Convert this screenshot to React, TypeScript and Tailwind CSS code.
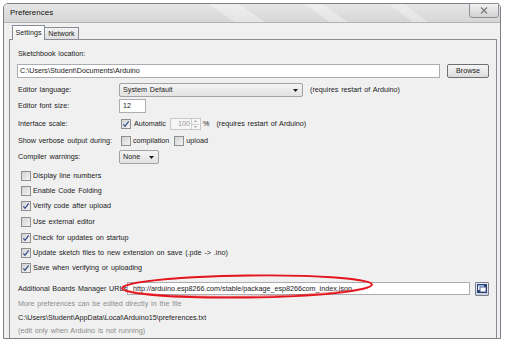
import React from "react";

function Check({ checked }: { checked?: boolean }) {
  return (
    <span className="w-[10px] h-[10px] border border-[#8e8f8f] bg-gradient-to-br from-[#d2d2d2] to-[#f4f4f4] flex items-center justify-center shrink-0">
      {checked && (
        <svg width="8" height="8" viewBox="0 0 8 8">
          <path d="M1.3 4.3 L3 6.2 L6.7 1.4" stroke="#3b5191" strokeWidth="1.2" fill="none" />
        </svg>
      )}
    </span>
  );
}

function Arrow() {
  return (
    <svg width="5" height="3" viewBox="0 0 5 3">
      <path d="M0 0 L5 0 L2.5 3 Z" fill="#1a1a1a" />
    </svg>
  );
}

function CheckRow({ label, checked, cls }: { label: string; checked?: boolean; cls: string }) {
  return (
    <div className={`flex items-center h-[12px] ml-[4px] ${cls}`}>
      <Check checked={checked} />
      <span className="ml-[2px]">{label}</span>
    </div>
  );
}

export default function App() {
  return (
    <div className="w-[507px] h-[349px] bg-white relative overflow-hidden font-['Liberation_Sans',Arial,sans-serif] text-[7.2px] [word-spacing:0.8px] leading-none text-[#1b1b1b]">
      <div className="ml-[3px] mt-[3px] w-[498px] h-[336px] border border-[#7c7f86] rounded-t-[5px] bg-[#f0f0f0] flex flex-col relative">
        {/* title bar */}
        <div className="h-[19px] relative overflow-hidden rounded-t-[4px] bg-gradient-to-b from-[#e6e6e6] to-[#d6d6d6] border-b border-[#b4b4b4] flex items-center pl-[6px] shrink-0">
          <svg className="absolute left-0 top-0" width="498" height="19" viewBox="0 0 498 19">
            <polygon points="205,0 235,0 262,19 232,19" fill="#ffffff" opacity="0.35" />
            <polygon points="300,0 318,0 345,19 327,19" fill="#ffffff" opacity="0.35" />
            <polygon points="385,0 400,0 425,19 410,19" fill="#ffffff" opacity="0.3" />
          </svg>
          <span className="relative text-[8px] text-[#111]">Preferences</span>
        </div>
        {/* close button */}
        <div className="absolute right-[1px] top-[-1px] w-[30px] h-[15px] border border-[#8d9099] rounded-b-[3px] bg-gradient-to-b from-[#f2f2f2] to-[#d2d2d2] flex items-center justify-center">
          <svg width="8" height="7" viewBox="0 0 8 7">
            <path d="M1 0.5 L7 6.5 M7 0.5 L1 6.5" stroke="#7a7a7a" strokeWidth="1.2" />
          </svg>
        </div>
        {/* body */}
        <div className="flex-1 flex flex-col pl-[5px] pr-[3px] pt-[2px]">
          <div className="flex items-end h-[14px] ml-[3px] shrink-0 relative z-10">
            <div className="w-[33px] border border-[#898c95] border-b-0 bg-gradient-to-b from-white to-[#f0f0f0] flex items-center justify-center pb-[1px] mb-[-1px] h-[15px]">
              Settings
            </div>
            <div className="h-[12px] w-[34px] border border-[#898c95] border-l-0 border-b-0 bg-gradient-to-b from-[#f2f2f2] to-[#e1e1e1] flex items-center justify-center">
              Network
            </div>
          </div>
          <div className="flex-1 border border-b-0 border-[#898c95] bg-[#f0f0f0] flex flex-col pl-[7px] pr-[7px]">
            <div className="mt-[8px] h-[12px] flex items-center ml-[1px]">Sketchbook location:</div>
            <div className="mt-[4px] h-[14px] flex items-center">
              <div className="w-[423px] h-[14px] bg-white border border-[#abadb3] flex items-center pl-[2px]">
                C:\Users\Student\Documents\Arduino
              </div>
              <div className="ml-[7px] w-[42px] h-[14px] border border-[#707070] rounded-[2px] bg-gradient-to-b from-[#f6f6f6] to-[#dcdcdc] flex items-center justify-center">
                Browse
              </div>
            </div>
            <div className="mt-[5px] h-[14px] flex items-center">
              <span className="w-[101px] ml-[1px]">Editor language:</span>
              <div className="w-[184px] h-[14px] border border-[#a3a3a3] rounded-[2px] bg-gradient-to-b from-[#f4f4f4] to-[#e2e2e2] flex items-center justify-between pl-[3px] pr-[4px]">
                <span>System Default</span>
                <Arrow />
              </div>
              <span className="ml-[7px]">(requires restart of Arduino)</span>
            </div>
            <div className="mt-[2px] h-[14px] flex items-center">
              <span className="w-[101px] ml-[1px]">Editor font size:</span>
              <div className="w-[27px] h-[14px] bg-white border border-[#abadb3] flex items-center pl-[3px]">12</div>
            </div>
            <div className="mt-[5px] h-[12px] flex items-center">
              <span className="w-[103px] ml-[1px]">Interface scale:</span>
              <Check checked />
              <span className="ml-[3px]">Automatic</span>
              <div className="ml-[4px] w-[31px] h-[12px] border border-[#c8c8c8] bg-[#f7f7f7] flex items-center">
                <span className="w-[19px] text-right text-[#9a9a9a]">100</span>
                <div className="ml-[1px] w-[8px] h-[10px] flex flex-col border-l border-[#d0d0d0]">
                  <div className="flex-1 flex items-center justify-center border-b border-[#d0d0d0]">
                    <svg width="3" height="2" viewBox="0 0 3 2"><path d="M0 2 L3 2 L1.5 0 Z" fill="#a8a8a8" /></svg>
                  </div>
                  <div className="flex-1 flex items-center justify-center">
                    <svg width="3" height="2" viewBox="0 0 3 2"><path d="M0 0 L3 0 L1.5 2 Z" fill="#a8a8a8" /></svg>
                  </div>
                </div>
              </div>
              <span className="ml-[2px]">%</span>
              <span className="ml-[7px]">(requires restart of Arduino)</span>
            </div>
            <div className="mt-[5px] h-[12px] flex items-center">
              <span className="w-[103px] ml-[1px] whitespace-nowrap">Show verbose output during:</span>
              <Check />
              <span className="ml-[2px]">compilation</span>
              <span className="ml-[5px]"><Check /></span>
              <span className="ml-[2px]">upload</span>
            </div>
            <div className="mt-[3px] h-[14px] flex items-center">
              <span className="w-[101px] ml-[1px]">Compiler warnings:</span>
              <div className="w-[40px] h-[14px] border border-[#a3a3a3] rounded-[2px] bg-gradient-to-b from-[#f4f4f4] to-[#e2e2e2] flex items-center justify-between pl-[3px] pr-[4px]">
                <span>None</span>
                <Arrow />
              </div>
            </div>
            <CheckRow cls="mt-[6px]" label="Display line numbers" />
            <CheckRow cls="mt-[3px]" label="Enable Code Folding" />
            <CheckRow cls="mt-[3px]" label="Verify code after upload" checked />
            <CheckRow cls="mt-[4px]" label="Use external editor" />
            <CheckRow cls="mt-[4px]" label="Check for updates on startup" checked />
            <CheckRow cls="mt-[3px]" label="Update sketch files to new extension on save (.pde -> .ino)" checked />
            <CheckRow cls="mt-[3px]" label="Save when verifying or uploading" checked />
            <div className="mt-[8px] h-[13px] flex items-center">
              <span className="w-[109px] ml-[1px] whitespace-nowrap">Additional Boards Manager URLs:</span>
              <div className="w-[344px] h-[13px] bg-white border border-[#abadb3] flex items-center pl-[5px] whitespace-nowrap overflow-hidden">
                http://arduino.esp8266.com/stable/package_esp8266com_index.json
              </div>
              <div className="ml-[5px] w-[14px] h-[14px] border border-[#7a7f8c] rounded-[1px] bg-gradient-to-b from-[#eef1f6] to-[#c9d0dc] flex items-center justify-center">
                <svg width="10" height="9" viewBox="0 0 10 9">
                  <rect x="0" y="0" width="10" height="9" fill="#2e4277" />
                  <rect x="1" y="1" width="6" height="5" fill="#ffffff" />
                  <rect x="1" y="1" width="6" height="1.5" fill="#8fb0e0" />
                  <rect x="3" y="3" width="6" height="5" fill="#ffffff" stroke="#2e4277" strokeWidth="0.8" />
                </svg>
              </div>
            </div>
            <div className="mt-[3px] h-[12px] flex items-center ml-[1px] text-[#8c8c8c]">More preferences can be edited directly in the file</div>
            <div className="mt-[2px] h-[12px] flex items-center ml-[1px]">C:\Users\Student\AppData\Local\Arduino15\preferences.txt</div>
            <div className="mt-[1px] h-[12px] flex items-center ml-[1px] text-[#8c8c8c]">(edit only when Arduino is not running)</div>
          </div>
        </div>
      </div>
      <svg className="absolute left-0 top-0 pointer-events-none" width="507" height="349" viewBox="0 0 507 349">
        <g transform="rotate(-0.8 247 286.5)">
          <ellipse cx="247" cy="286.5" rx="125" ry="11" fill="none" stroke="#e3161e" strokeWidth="1.8" />
          <ellipse cx="247.5" cy="286" rx="124" ry="10.3" fill="none" stroke="#e3161e" strokeWidth="0.8" opacity="0.7" />
        </g>
      </svg>
    </div>
  );
}
